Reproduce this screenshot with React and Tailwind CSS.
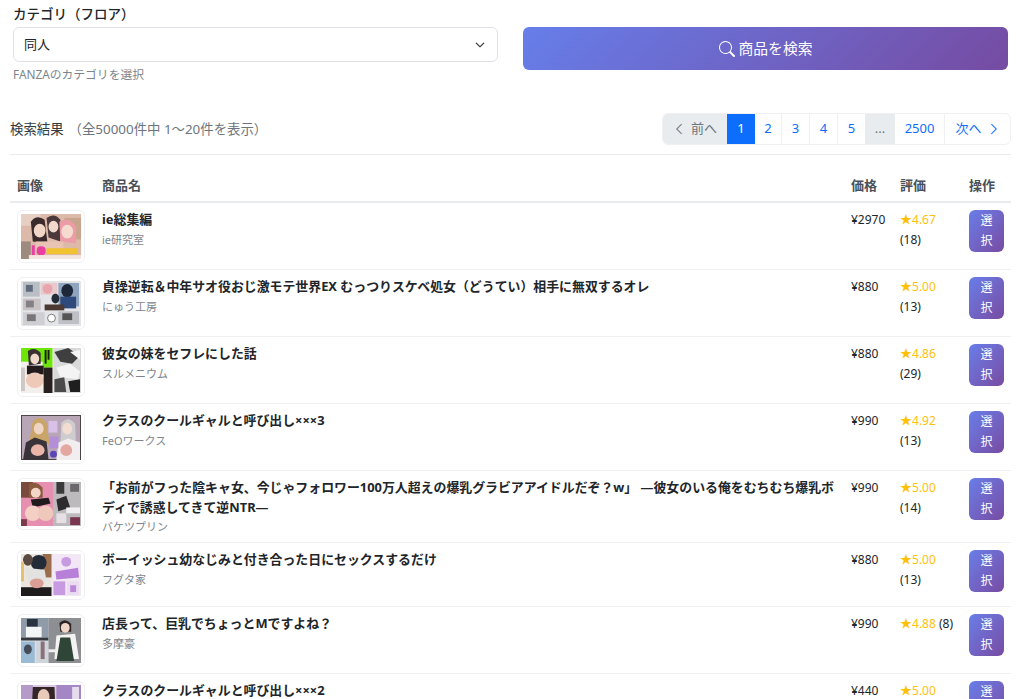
import { BsChevronDown, BsChevronLeft, BsChevronRight, BsSearch } from 'react-icons/bs';

const thumbs = [
  // ie総集編
  <>
    <rect width="61" height="46" fill="#dcb9a8" />
    <rect x="0" y="0" width="20" height="12" fill="#e8cfc4" />
    <rect x="44" y="4" width="17" height="22" fill="#c9a58e" />
    <path d="M10 8 Q16 0 24 6 L27 30 L12 28 Z" fill="#3b2a2c" />
    <path d="M26 4 Q34 -2 40 6 L40 28 L28 24 Z" fill="#4a383a" />
    <ellipse cx="19" cy="17" rx="6" ry="7" fill="#f1d5c6" />
    <ellipse cx="33" cy="13" rx="5" ry="6" fill="#f3d9cb" />
    <path d="M39 8 Q50 2 56 14 L56 30 L40 28 Z" fill="#ec9ca6" />
    <ellipse cx="47" cy="18" rx="6" ry="7" fill="#f6dcd0" />
    <rect x="15" y="28" width="28" height="10" fill="#e9c3b3" />
    <rect x="0" y="28" width="10" height="18" fill="#a08a80" />
    <rect x="11" y="32" width="3" height="11" fill="#e93fa0" />
    <rect x="16" y="33" width="9" height="9" rx="4" fill="#e93fa0" />
    <rect x="26" y="35" width="32" height="6" fill="#f1c232" />
    <rect x="8" y="42" width="53" height="4" fill="#f2e6df" />
  </>,
  // 貞操逆転
  <>
    <rect width="61" height="46" fill="#e4e5e8" />
    <rect x="2" y="1" width="17" height="15" fill="#b9bdc4" />
    <rect x="20" y="2" width="17" height="12" fill="#e9c9cc" />
    <rect x="5" y="4" width="7" height="7" fill="#5f6b7c" />
    <ellipse cx="27" cy="8" rx="5" ry="5" fill="#e8a5ae" />
    <rect x="38" y="2" width="21" height="24" fill="#8fa4bf" />
    <ellipse cx="47" cy="10" rx="6" ry="7" fill="#1e2738" />
    <rect x="40" y="16" width="16" height="12" fill="#2e4a7c" />
    <ellipse cx="35" cy="18" rx="4" ry="5" fill="#232a38" />
    <rect x="24" y="24" width="20" height="6" fill="#4b3a34" />
    <rect x="2" y="18" width="18" height="12" fill="#c9c3c6" />
    <rect x="5" y="20" width="8" height="7" fill="#857f86" />
    <rect x="2" y="32" width="22" height="13" fill="#cfcfd3" />
    <rect x="6" y="34" width="9" height="7" fill="#7a7578" />
    <circle cx="31" cy="38" r="4" fill="#fff" stroke="#777" />
    <rect x="38" y="31" width="21" height="13" fill="#bfc0c5" />
    <rect x="42" y="33" width="10" height="7" fill="#555" />
  </>,
  // 彼女の妹を
  <>
    <rect width="61" height="46" fill="#f3efec" />
    <rect width="30" height="14" fill="#6fe60a" />
    <rect x="22" y="0" width="10" height="20" fill="#6fe60a" />
    <path d="M7 3 Q14 -2 20 5 L20 16 L8 18 Z" fill="#3a3033" />
    <ellipse cx="14" cy="11" rx="4.5" ry="5.5" fill="#f1d9cd" />
    <rect x="24" y="2" width="2" height="14" fill="#182010" />
    <rect x="27" y="2" width="2" height="10" fill="#182010" />
    <rect x="6" y="18" width="17" height="9" fill="#231a1c" />
    <ellipse cx="14" cy="33" rx="9" ry="8" fill="#efc9b8" />
    <rect x="23" y="20" width="9" height="26" fill="#26201f" />
    <rect x="0" y="20" width="4" height="24" fill="#cfc8c6" />
    <rect x="33" y="0" width="28" height="46" fill="#d9d9d9" />
    <path d="M34 4 L48 0 L60 8 L52 16 L40 14 Z" fill="#3f3f3f" />
    <path d="M36 20 L50 16 L60 24 L58 32 L40 30 Z" fill="#f4f4f4" />
    <path d="M34 32 L44 30 L46 45 L34 45 Z" fill="#4a4a4a" />
    <path d="M48 34 L60 32 L60 45 L50 45 Z" fill="#1f1f1f" />
    <path d="M50 4 L60 2 L60 12 Z" fill="#f5f5f5" />
  </>,
  // クラスのクールギャル
  <>
    <rect width="61" height="46" fill="#b8a6b6" />
    <rect x="0" y="0" width="61" height="1" fill="#4a4448" />
    <rect x="0" y="45" width="61" height="1" fill="#4a4448" />
    <rect x="0" y="0" width="1" height="46" fill="#4a4448" />
    <rect x="60" y="0" width="1" height="46" fill="#4a4448" />
    <path d="M12 6 Q20 -1 26 8 L29 30 L8 30 Z" fill="#c9a567" />
    <ellipse cx="18" cy="14" rx="5" ry="6" fill="#f0d5c6" />
    <path d="M5 28 L14 23 L26 27 L28 46 L2 46 Z" fill="#38343a" />
    <ellipse cx="17" cy="36" rx="7" ry="6" fill="#e8b5a8" />
    <path d="M41 8 Q48 0 55 9 L56 32 L40 30 Z" fill="#cfccd0" />
    <ellipse cx="47" cy="14" rx="5" ry="6" fill="#f3dcd1" />
    <path d="M38 28 L48 24 L60 28 L60 46 L36 46 Z" fill="#f2eef0" />
    <ellipse cx="46" cy="36" rx="6" ry="6" fill="#e3a9a0" />
    <rect x="28" y="6" width="9" height="12" fill="#d8c0e8" />
    <rect x="29" y="22" width="9" height="12" fill="#b28fd8" />
    <circle cx="33" cy="40" r="3.5" fill="#5a46b5" />
  </>,
  // お前がフった
  <>
    <rect width="61" height="45" fill="#c9c3c7" />
    <rect width="33" height="45" fill="#e68fb0" />
    <rect x="0" y="0" width="12" height="16" fill="#7a4a3c" />
    <path d="M8 2 Q16 -2 22 6 L22 16 L8 16 Z" fill="#8a5a3e" />
    <ellipse cx="15" cy="11" rx="5" ry="5" fill="#f2d7c8" />
    <path d="M10 18 L28 16 L30 22 L12 26 Z" fill="#211a1d" />
    <ellipse cx="12" cy="32" rx="8" ry="8" fill="#f3d0c3" />
    <ellipse cx="25" cy="32" rx="8" ry="8" fill="#f0c8bb" />
    <rect x="0" y="38" width="6" height="7" fill="#7a3a4a" />
    <rect x="33" y="0" width="28" height="45" fill="#bdbabd" />
    <rect x="36" y="0" width="8" height="12" fill="#3a3a3c" />
    <rect x="50" y="2" width="9" height="8" fill="#6a686c" />
    <path d="M36 18 L46 14 L50 26 L38 30 Z" fill="#2d2b2e" />
    <rect x="46" y="26" width="14" height="6" fill="#f0eef0" />
    <rect x="36" y="32" width="10" height="10" fill="#e6e0e4" />
    <rect x="50" y="36" width="10" height="8" fill="#7a3550" />
  </>,
  // ボーイッシュ
  <>
    <rect width="61" height="43" fill="#f0e8f2" />
    <rect width="31" height="43" fill="#eae6df" />
    <rect x="22" y="0" width="9" height="24" fill="#9a6e4c" />
    <ellipse cx="18" cy="9" rx="8" ry="8" fill="#232a38" />
    <ellipse cx="7" cy="6" rx="5" ry="6" fill="#5a4a42" />
    <path d="M4 14 L24 16 L26 28 L8 30 Z" fill="#e2e3e0" />
    <rect x="0" y="8" width="3" height="20" fill="#e4c070" />
    <rect x="0" y="34" width="31" height="9" fill="#1f1c1e" />
    <ellipse cx="16" cy="30" rx="7" ry="5" fill="#d99e96" />
    <rect x="33" y="2" width="26" height="16" fill="#f3e6f6" />
    <path d="M35 18 L58 14 L59 24 L36 26 Z" fill="#b77fd8" />
    <ellipse cx="46" cy="8" rx="5" ry="5" fill="#c79be0" />
    <rect x="33" y="28" width="12" height="14" fill="#c89ae2" />
    <rect x="47" y="28" width="12" height="14" fill="#ecdcf2" />
    <rect x="50" y="32" width="6" height="7" fill="#bb88da" />
  </>,
  // 店長って
  <>
    <rect width="61" height="46" fill="#dfe3e6" />
    <rect width="28" height="20" fill="#8f9ba8" />
    <rect x="6" y="1" width="11" height="8" fill="#2a3240" />
    <rect x="5" y="9" width="16" height="11" fill="#f4f5f6" />
    <rect x="0" y="20" width="28" height="3" fill="#35383e" />
    <rect x="0" y="24" width="14" height="22" fill="#9bbad3" />
    <ellipse cx="7" cy="32" rx="4" ry="5" fill="#454c5a" />
    <rect x="15" y="24" width="13" height="22" fill="#cfd5da" />
    <rect x="20" y="24" width="4" height="18" fill="#8a7078" />
    <rect x="28" y="0" width="33" height="46" fill="#8e8f92" />
    <path d="M39 5 Q45 -1 51 6 L51 14 L40 14 Z" fill="#2a2426" />
    <ellipse cx="45" cy="10" rx="4.5" ry="5" fill="#efd6c8" />
    <path d="M36 18 L55 16 L59 42 L34 42 Z" fill="#f4f3f3" />
    <path d="M40 20 L50 20 L54 44 L36 44 Z" fill="#2f4537" />
    <rect x="28" y="32" width="8" height="3" fill="#f1efee" />
  </>,
  // クラスのクール 2
  <>
    <rect width="61" height="46" fill="#d8c8e0" />
    <rect x="0" y="0" width="12" height="46" fill="#b59ac9" />
    <path d="M12 2 L34 2 L36 46 L10 46 Z" fill="#332528" />
    <ellipse cx="23" cy="12" rx="6" ry="8" fill="#e9c9b8" />
    <rect x="36" y="0" width="25" height="46" fill="#a486c4" />
    <rect x="52" y="2" width="7" height="14" fill="#e6dcee" />
  </>,
];

const items = [
  { title: 'ie総集編', maker: 'ie研究室', price: '¥2970', rate: '4.67', count: '(18)', thumb: 'h-[45px]', vb: '0 0 61 46' },
  { title: '貞操逆転＆中年サオ役おじ激モテ世界EX むっつりスケベ処女（どうてい）相手に無双するオレ', maker: 'にゅう工房', price: '¥880', rate: '5.00', count: '(13)', thumb: 'h-[45px]', vb: '0 0 61 46' },
  { title: '彼女の妹をセフレにした話', maker: 'スルメニウム', price: '¥880', rate: '4.86', count: '(29)', thumb: 'h-[45px]', vb: '0 0 61 46' },
  { title: 'クラスのクールギャルと呼び出し×××3', maker: 'FeOワークス', price: '¥990', rate: '4.92', count: '(13)', thumb: 'h-[45px]', vb: '0 0 61 46' },
  { title: '「お前がフった陰キャ女、今じゃフォロワー100万人超えの爆乳グラビアアイドルだぞ？w」 —彼女のいる俺をむちむち爆乳ボディで誘惑してきて逆NTR—', maker: 'バケツプリン', price: '¥990', rate: '5.00', count: '(14)', thumb: 'h-[44px]', vb: '0 0 61 45' },
  { title: 'ボーイッシュ幼なじみと付き合った日にセックスするだけ', maker: 'フグタ家', price: '¥880', rate: '5.00', count: '(13)', thumb: 'h-[42px]', vb: '0 0 61 43' },
  { title: '店長って、巨乳でちょっとMですよね？', maker: '多摩豪', price: '¥990', rate: '4.88', count: '(8)', thumb: 'h-[45px]', vb: '0 0 61 46', inline: true },
  { title: 'クラスのクールギャルと呼び出し×××2', maker: '', price: '¥440', rate: '5.00', count: '', thumb: 'h-[45px]', vb: '0 0 61 46' },
];

const pages = [
  { label: <><BsChevronLeft className="w-3 h-3 mr-1.5" strokeWidth={0.5} />前へ</>, w: 'w-[64px] bg-[#e9ecef] text-[#6c757d]' },
  { label: '1', w: 'w-[28px] bg-[#0d6efd] text-white' },
  { label: '2', w: 'w-[27px] text-[#0d6efd] border-r border-[#eef0f2]' },
  { label: '3', w: 'w-[28px] text-[#0d6efd] border-r border-[#eef0f2]' },
  { label: '4', w: 'w-[28px] text-[#0d6efd] border-r border-[#eef0f2]' },
  { label: '5', w: 'w-[27px] text-[#0d6efd]' },
  { label: '...', w: 'w-[30px] bg-[#e9ecef] text-[#6c757d]' },
  { label: '2500', w: 'w-[50px] text-[#0d6efd] border-r border-[#eef0f2]' },
  { label: <>次へ<BsChevronRight className="w-3 h-3 ml-1.5" strokeWidth={0.5} /></>, w: 'w-[65px] text-[#0d6efd]' },
];

export default function App() {
  return (
    <div className="h-[699px] overflow-hidden bg-white text-[#212529] font-['Noto_Sans','Noto_Sans_CJK_JP',sans-serif]">
      <div className="flex gap-[25px] pl-[13px] pr-4">
        <div className="w-[485px]">
          <label className="block h-[27px] pt-[4px] text-[13.5px] leading-5 font-medium">カテゴリ（フロア）</label>
          <div className="flex h-[35px] items-center justify-between rounded-md border border-[#dee2e6] pl-[10px] pr-[12px] text-[13px]">
            <span>同人</span>
            <BsChevronDown className="w-[10px] h-[10px]" strokeWidth={1} />
          </div>
          <p className="mt-[3px] text-[11.8px] leading-[18px] text-[#7c858d]">FANZAのカテゴリを選択</p>
        </div>
        <div className="flex-1 pt-[27px]">
          <button className="flex h-[43px] w-full items-center justify-center gap-[4px] rounded-md bg-[linear-gradient(135deg,#667eea,#764ba2)] text-[14.8px] text-white">
            <BsSearch className="w-[16px] h-[16px]" />
            商品を検索
          </button>
        </div>
      </div>

      <div className="mx-[10px] w-[1001px]">
        <div className="mt-[30px] flex h-[42px] items-start justify-between border-b border-[#e9ecef]">
          <div className="flex h-8 items-center text-[13.4px]">
            <span className="text-[#343a40]">検索結果</span>
            <span className="ml-[5px] text-[#6c757d]">（全50000件中 1〜20件を表示）</span>
          </div>
          <div className="flex h-8 overflow-hidden rounded-md border border-[#eef0f2] text-[13px]">
            {pages.map((p, i) => (
              <div key={i} className={`flex items-center justify-center ${p.w}`}>{p.label}</div>
            ))}
          </div>
        </div>

        <table className="mt-[16px] w-full table-fixed border-collapse text-[12px]">
          <colgroup>
            <col className="w-[85px]" />
            <col />
            <col className="w-[49px]" />
            <col className="w-[69px]" />
            <col className="w-[49px]" />
          </colgroup>
          <thead>
            <tr className="h-[31px] border-b-2 border-[#e9ecef] text-left text-[13px] text-[#495057]">
              <th className="px-[7px] font-semibold">画像</th>
              <th className="px-[7px] font-semibold">商品名</th>
              <th className="px-[7px] font-semibold">価格</th>
              <th className="px-[7px] font-semibold">評価</th>
              <th className="px-[7px] font-semibold">操作</th>
            </tr>
          </thead>
          <tbody>
            {items.map((it, i) => (
              <tr key={i} className="border-b border-[#eef0f2] align-top">
                <td className="px-[7px] pt-[7px] pb-[6px]">
                  <div className="w-[68px] rounded-md border border-[#eef0f2] p-[3px]">
                    <svg viewBox={it.vb} preserveAspectRatio="none" className={`block w-[60px] ${it.thumb}`}>{thumbs[i]}</svg>
                  </div>
                </td>
                <td className="px-[7px] pt-[7px] pb-[6px]">
                  <div className="text-[12.9px] leading-[19.5px] font-bold">{it.title}</div>
                  {it.maker && <div className="mt-[1px] text-[11px] leading-[18px] text-[#7c858d]">{it.maker}</div>}
                </td>
                <td className="px-[7px] pt-[7px] pb-[6px] leading-[20px]">{it.price}</td>
                <td className="px-[7px] pt-[7px] pb-[6px] leading-[20px]">
                  <span className="text-[#ffc107]">★{it.rate}</span>
                  {it.inline ? ' ' : <br />}
                  {it.count}
                </td>
                <td className="px-[7px] pt-[7px] pb-[6px]">
                  <button className="block h-[42px] w-[35px] rounded-md bg-gradient-to-br from-[#667eea] to-[#764ba2] px-[10px] text-[12px] leading-[20px] text-white">選択</button>
                </td>
              </tr>
            ))}
          </tbody>
        </table>
      </div>
    </div>
  );
}
